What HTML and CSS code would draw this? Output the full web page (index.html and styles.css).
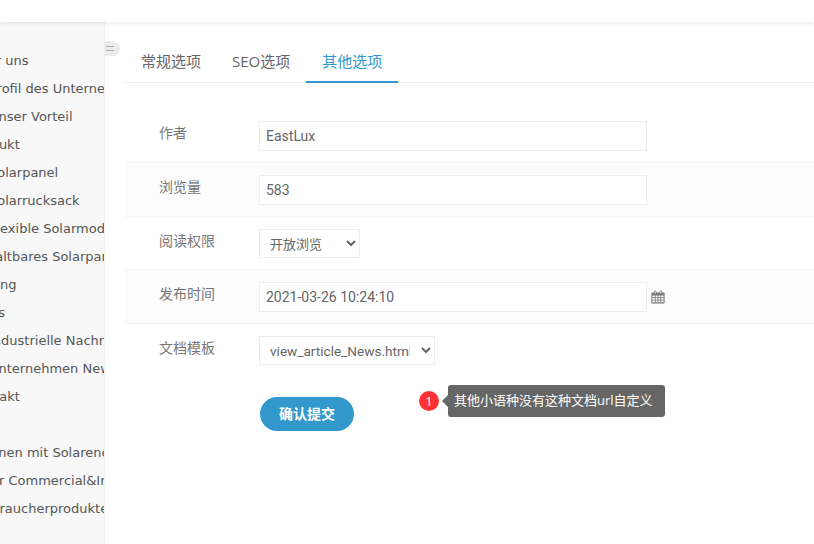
FILE: index.html
```html
<!DOCTYPE html>
<html lang="zh">
<head>
<meta charset="utf-8">
<title>其他选项</title>
<link rel="stylesheet" href="styles.css">
</head>
<body>
<header class="topbar"></header>
<div class="layout">
  <nav class="sidebar">
    <ul class="menu">
      <li class="item lv1">Über uns</li>
      <li class="item lv2">Profil des Unternehmens</li>
      <li class="item lv2">Unser Vorteil</li>
      <li class="item lv1">Produkt</li>
      <li class="item lv2">Solarpanel</li>
      <li class="item lv2">Solarrucksack</li>
      <li class="item lv2">Flexible Solarmodule</li>
      <li class="item lv2">Faltbares Solarpanel</li>
      <li class="item lv1">Lösung</li>
      <li class="item lv1">News</li>
      <li class="item lv2">Industrielle Nachrichten</li>
      <li class="item lv2">Unternehmen News</li>
      <li class="item lv1">Kontakt</li>
      <li class="item spacer"></li>
      <li class="item lv1">Wohnen mit Solarenergie</li>
      <li class="item lv3">Für Commercial&amp;Industrial</li>
      <li class="item lv1">Verbraucherprodukte</li>
    </ul>
    <button class="toggle" type="button" aria-label="收起"><span class="toggle-lines"></span></button>
  </nav>
  <main class="content">
    <div class="tabs">
      <a class="tab">常规选项</a>
      <a class="tab tab-seo">SEO选项</a>
      <a class="tab active">其他选项</a>
    </div>
    <form class="form">
      <div class="row">
        <label class="label">作者</label>
        <input class="input" type="text" value="EastLux">
      </div>
      <div class="row alt">
        <label class="label">浏览量</label>
        <input class="input" type="text" value="583">
      </div>
      <div class="row">
        <label class="label">阅读权限</label>
        <select class="select select-short"><option>开放浏览</option></select>
      </div>
      <div class="row alt">
        <label class="label">发布时间</label>
        <input class="input" type="text" value="2021-03-26 10:24:10">
        <svg class="cal" width="14" height="14" viewBox="0 0 14 14" aria-hidden="true">
          <path fill="#777" fill-rule="evenodd" d="M1 2.5h2V1.6a1 1 0 0 1 1-1h.4a1 1 0 0 1 1 1v.9h3.2v-.9a1 1 0 0 1 1-1h.4a1 1 0 0 1 1 1v.9h2a.6.6 0 0 1 .6.6v9.7a.6.6 0 0 1-.6.6H1a.6.6 0 0 1-.6-.6V3.100A.6.6 0 0 1 1 2.500ZM3.700 1.300v2.200h1V1.300ZM9.300 1.300v2.200h1V1.300ZM1.400 5.500v1.800h2.400V5.500ZM4.600 5.500v1.800h2V5.500ZM7.400 5.500v1.800h2V5.500ZM10.200 5.500v1.800h2.400V5.500ZM1.400 8v1.700h2.400V8ZM4.600 8v1.700h2V8ZM7.400 8v1.700h2V8ZM10.200 8v1.700h2.400V8ZM1.400 10.400v1.900h2.400v-1.900ZM4.600 10.400v1.900h2v-1.900ZM7.400 10.400v1.900h2v-1.900ZM10.200 10.400v1.900h2.400v-1.900Z"/>
        </svg>
      </div>
      <div class="row last">
        <label class="label">文档模板</label>
        <select class="select select-long"><option>view_article_News.html</option></select>
      </div>
      <div class="actions">
        <button class="submit" type="button">确认提交</button>
        <div class="note">
          <span class="badge">1</span>
          <span class="tip">其他小语种没有这种文档url自定义</span>
        </div>
      </div>
    </form>
  </main>
</div>
</body>
</html>
```

FILE: styles.css
```css
* { box-sizing: border-box; }
html, body { height: 100%; }
body {
  margin: 0;
  background: #fff;
  color: #666;
  overflow: hidden;
  display: flex;
  flex-direction: column;
  font-family: "Open Sans", "Noto Sans CJK SC", sans-serif;
  font-size: 14px;
}
.topbar {
  flex: 0 0 22px;
  background: #fff;
  box-shadow: 0 1px 4px rgba(0, 0, 0, .1);
  position: relative;
  z-index: 2;
}
.layout { flex: 1; display: flex; min-height: 0; }
.sidebar {
  flex: 0 0 105px;
  width: 105px;
  min-width: 0;
  position: relative;
  background: #f8f8f8;
  border-right: 1px solid #f0f0f0;
}
.menu {
  list-style: none;
  margin: 0;
  padding: 25px 0 0;
  height: 100%;
  overflow: hidden;
  font-family: "DejaVu Sans", sans-serif;
  font-size: 13px;
  color: #555;
}
.item { height: 28px; line-height: 28px; white-space: nowrap; }
.lv1 { margin-left: -30px; }
.lv2 { margin-left: -11px; }
.lv3 { margin-left: -16px; }
.toggle {
  position: absolute;
  top: 19px;
  left: 104px;
  width: 16px;
  height: 15px;
  padding: 0 0 0 2px;
  border: 0;
  border-radius: 0 8px 8px 0;
  background: #ececec;
  display: flex;
  align-items: center;
}
.toggle-lines {
  width: 8px;
  height: 5px;
  border-top: 1px solid #aaa;
  border-bottom: 1px solid #aaa;
}
.content { flex: 1; min-width: 0; padding: 0 0 0 20px; }
.tabs {
  display: flex;
  height: 61px;
  padding-top: 21px;
  border-bottom: 1px solid #eee;
}
.tab {
  height: 40px;
  padding: 0 16px;
  margin-right: -1px;
  line-height: 37px;
  font-size: 15px;
  color: #666;
  border-bottom: 2px solid transparent;
}
.tab-seo { margin-right: 0; }
.tab.active { color: #39c; border-bottom-color: #39c; }
.form { padding-top: 26px; }
.row {
  display: flex;
  align-items: flex-start;
  padding: 12px 0 11px;
  border-bottom: 1px solid #f5f5f5;
}
.row.alt { background: #fcfcfc; }
.row.last { border-bottom: 0; }
.label {
  flex: 0 0 134px;
  padding-left: 34px;
  font-size: 14px;
  line-height: 24px;
  color: #777;
}
.input {
  width: 388px;
  height: 30px;
  padding: 0 6px;
  border: 1px solid #eee;
  background: #fff;
  font: 14px Roboto, "Noto Sans CJK SC", sans-serif;
  color: #666;
  outline: 0;
}
.select {
  height: 29px;
  padding: 0 4px 0 6px;
  border: 1px solid #eee;
  background: #fff;
  border-radius: 0;
  font: 13px "Open Sans", "Noto Sans CJK SC", sans-serif;
  color: #666;
  outline: 0;
}
.select-short { width: 101px; }
.select-long { width: 176px; padding-right: 8px; font: 13.6px Roboto, sans-serif; }
.cal { margin: 8px 0 0 4px; }
.actions { position: relative; padding: 21px 0 0 135px; }
.submit {
  width: 94px;
  height: 34px;
  padding: 0 0 2px;
  border: 0;
  border-radius: 17px;
  background: #39c;
  color: #fff;
  font: 700 14px "Open Sans", "Noto Sans CJK SC", sans-serif;
}
.note {
  position: absolute;
  left: 294px;
  top: 9px;
  display: flex;
  align-items: center;
  gap: 9px;
}
.badge {
  width: 20px;
  height: 20px;
  border-radius: 50%;
  background: #f33;
  color: #fff;
  font-size: 13px;
  line-height: 20px;
  text-align: center;
}
.tip {
  position: relative;
  height: 32px;
  padding: 0 12px 0 6px;
  border-radius: 3px;
  background: #666;
  color: #fff;
  font-size: 13px;
  line-height: 30px;
  white-space: nowrap;
}
.tip::before {
  content: "";
  position: absolute;
  left: -6px;
  top: 10px;
  border-style: solid;
  border-width: 6px 6px 6px 0;
  border-color: transparent #666 transparent transparent;
}
```
